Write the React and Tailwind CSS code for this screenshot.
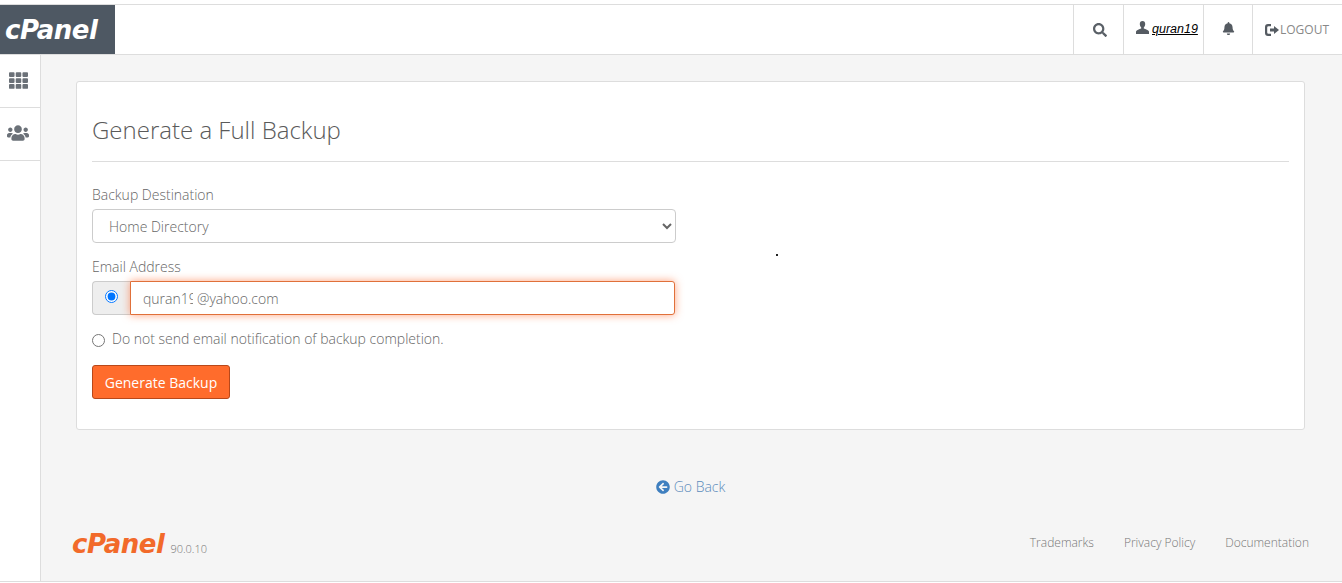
import { FaTh, FaUsers, FaSearch, FaBell, FaArrowCircleLeft } from "react-icons/fa";

function UserIcon() {
  return (
    <svg width="13" height="13" viewBox="0 0 13 13" fill="#555b62" className="-mt-[5px]">
      <path d="M6.5 0C8.3 0 9.2 1.3 9.2 3c0 1.4-.6 2.7-1.4 3.4v1.2c1.8.6 4.7 1.4 5.2 3V13H0v-2.4c.5-1.6 3.4-2.4 5.2-3V6.4C4.4 5.7 3.8 4.4 3.8 3 3.800 1.300 4.700 0 6.500 0z" />
    </svg>
  );
}

function LogoutIcon() {
  return (
    <svg width="14" height="12" viewBox="0 0 14 12" fill="#555b62">
      <path d="M6 0H3a3 3 0 0 0-3 3v6a3 3 0 0 0 3 3h3V9.800H3.500A1.300 1.300 0 0 1 2.200 8.500v-5A1.300 1.300 0 0 1 3.500 2.200H6z" />
      <path d="M9 2 14 6l-5 4V7.600H5V4.400h4z" />
    </svg>
  );
}

function Logo({ className }) {
  return (
    <span className={`font-['DejaVu_Sans',sans-serif] italic font-bold leading-none text-[26px] tracking-[-0.5px] ${className}`}>
      cPanel
    </span>
  );
}

function Sidebar() {
  return (
    <div className="w-[41px] shrink-0 bg-white border-r border-[#ddd]">
      <div className="h-[53px] flex items-center justify-center pb-[2px] pr-[3px] border-b border-[#ddd] text-[#6b7178] text-[19px]">
        <FaTh />
      </div>
      <div className="h-[53px] flex items-center justify-center pb-[2px] pr-[4px] border-b border-[#ddd] text-[#6b7178] text-[22px]">
        <FaUsers />
      </div>
    </div>
  );
}

export default function App() {
  return (
    <div className="relative h-[583px] w-[1342px] overflow-hidden bg-white pt-[4px] font-['Open_Sans',sans-serif] font-light text-[#5f6368] flex flex-col">
      <header className="h-[51px] shrink-0 flex border-y border-[#ddd] bg-white">
        <div className="w-[115px] bg-[#4e5863] flex items-center justify-start pl-[5px]">
          <Logo className="text-white" />
        </div>
        <div className="flex-1" />
        <div className="w-[50px] border-l border-[#ddd] flex items-center justify-center pl-[2px] text-[#5a6067] text-[14px]">
          <FaSearch />
        </div>
        <div className="w-[80px] border-l border-[#ddd] flex items-center pl-[12px] gap-[3px]">
          <UserIcon />
          <span className="font-['Liberation_Sans',sans-serif] font-normal italic underline text-[12.5px] text-black">quran19</span>
        </div>
        <div className="w-[49px] border-l border-[#ddd] flex items-center justify-center text-[#555b62] text-[13px]">
          <FaBell className="-mt-[3px]" />
        </div>
        <div className="w-[90px] border-l border-[#ddd] flex items-center pl-[12px] gap-[1px]">
          <LogoutIcon />
          <span className="text-[12px] font-normal text-[#888]">LOGOUT</span>
        </div>
      </header>
      <div className="flex-1 flex min-h-0 border-b border-[#ddd] mb-[1px]">
        <Sidebar />
        <main className="flex-1 bg-[#f5f5f5] pt-[26px] pl-[35px] pr-[33px] flex flex-col">
          <section className="h-[349px] mr-[4px] bg-white border border-[#ddd] rounded-[3px] px-[15px] pt-[32px]">
            <h1 className="text-[24px] leading-[32px] font-light text-[#5a5a5a]">Generate a Full Backup</h1>
            <div className="mt-[15px] border-t border-[#ddd]" />
            <label className="block mt-[23px] text-[14px] leading-[20px] text-[#666]">Backup Destination</label>
            <select
              defaultValue="home"
              className="mt-[4px] block w-[584px] h-[34px] bg-white border border-[#ccc] rounded-[4px] pl-[12px] text-[14px] font-light text-[#666]"
            >
              <option value="home">Home Directory</option>
            </select>
            <label className="block mt-[14px] text-[14px] leading-[20px] text-[#666]">Email Address</label>
            <div className="mt-[4px] flex w-[583px] h-[34px]">
              <div className="w-[38px] shrink-0 bg-[#eee] border border-[#ccc] border-r-0 rounded-l-[4px] flex items-center justify-center">
                <input type="radio" name="notify" defaultChecked className="w-[13px] h-[13px] -mt-[3px]" />
              </div>
              <div className="flex-1 flex items-center bg-white border border-[#e0703a] rounded-r-[3px] pl-[12px] text-[14px] text-[#666] shadow-[0_0_8px_rgba(255,100,40,0.6)]">
                <span className="inline-block w-[50px] mr-[4px] overflow-hidden whitespace-nowrap">quran19</span>
                <span>@yahoo.com</span>
              </div>
            </div>
            <div className="mt-[14px] flex items-center gap-[7px] text-[14px] leading-[20px] text-[#666]">
              <input type="radio" name="notify" className="w-[13px] h-[13px] mt-[2px]" />
              <span>Do not send email notification of backup completion.</span>
            </div>
            <button className="mt-[16px] block w-[138px] h-[34px] bg-[#ff6c2c] border border-[#b8481a] rounded-[3px] font-normal text-white text-[14px]">
              Generate Backup
            </button>
          </section>
          <div className="mt-[47px] mr-[4px] flex items-center justify-center gap-[4px] text-[14px] leading-[20px] text-[#5b8bbb]">
            <FaArrowCircleLeft className="text-[#3f7fbf] text-[14px]" />
            <span>Go Back</span>
          </div>
          <footer className="mt-[34px] flex items-center justify-between">
            <div className="flex items-end gap-[6px] -ml-[4px]">
              <Logo className="text-[#f26a2a]" />
              <span className="text-[11px] leading-[14px] mb-[1px] text-[#777]">90.0.10</span>
            </div>
            <div className="flex gap-[30px] mb-[2px] text-[12px] text-[#777]">
              <span>Trademarks</span>
              <span>Privacy Policy</span>
              <span>Documentation</span>
            </div>
          </footer>
        </main>
      </div>
      <div className="absolute left-[776px] top-[254px] w-[2px] h-[2px] bg-[#222]" />
    </div>
  );
}
